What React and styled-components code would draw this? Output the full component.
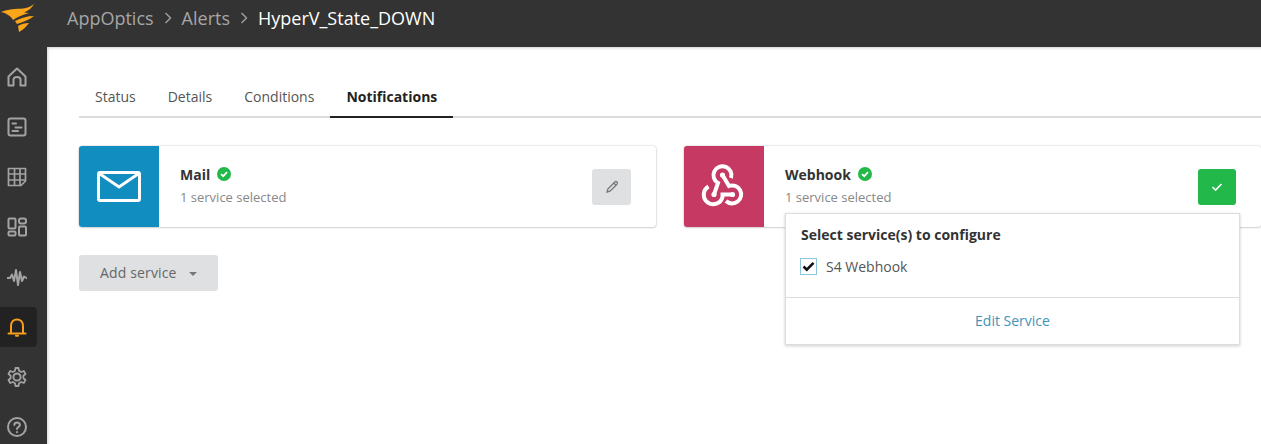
import React from 'react'
import styled, { createGlobalStyle } from 'styled-components'

const GlobalStyle = createGlobalStyle`
  html, body {
    margin: 0;
    padding: 0;
    height: 444px;
    overflow: hidden;
    background: #fff;
    font-family: "Open Sans", "Liberation Sans", sans-serif;
  }
`

const Page = styled.div`
  display: flex;
  flex-direction: column;
  width: 1261px;
  height: 444px;
  overflow: hidden;
`

const Header = styled.header`
  display: flex;
  align-items: flex-start;
  flex: none;
  height: 47px;
  background: #333333;
`

const LogoBox = styled.div`
  width: 67px;
  flex: none;
  height: 34px;
`

const Breadcrumb = styled.nav`
  display: flex;
  align-items: center;
  height: 35px;
  font-size: 18px;
  color: #a6a6a6;
`

const Crumb = styled.span`
  color: ${p => (p.$current ? '#ffffff' : '#a6a6a6')};
`

const CrumbArrow = styled.svg`
  width: 8px;
  height: 12px;
  margin: 0 10px;
  fill: none;
  stroke: #a0a0a0;
  stroke-width: 1.4;
`

const Body = styled.div`
  display: flex;
  flex: 1;
  min-height: 0;
`

const Sidebar = styled.aside`
  display: flex;
  flex-direction: column;
  flex: none;
  width: 47px;
  padding-top: 10px;
  background: #333333;
`

const NavItem = styled.div`
  display: flex;
  flex: none;
  align-items: center;
  justify-content: center;
  width: 37px;
  height: 40px;
  margin-bottom: 10px;
  border-radius: 0 4px 4px 0;
  color: ${p => (p.$active ? '#f99d1c' : '#a3a3a3')};
  background: ${p => (p.$active ? '#222222' : 'transparent')};
`

const NavIcon = styled.svg`
  width: 20px;
  height: 20px;
  margin-left: -3px;
  fill: none;
  stroke: currentColor;
  stroke-width: 2;
  stroke-linecap: round;
  stroke-linejoin: round;
`

const Main = styled.main`
  flex: 1;
  min-width: 0;
  padding: 33px 0 0 32px;
  background: #fff;
  box-shadow: inset 2px 2px 3px -1px rgba(0, 0, 0, 0.18);
`

const Tabs = styled.div`
  display: flex;
  height: 36px;
  border-bottom: 2px solid #dcdcdc;
`

const Tab = styled.div`
  height: 36px;
  padding: 0 16px;
  font-size: 14px;
  line-height: 34px;
  font-weight: ${p => (p.$active ? 700 : 400)};
  color: ${p => (p.$active ? '#222222' : '#555555')};
  border-bottom: 2px solid ${p => (p.$active ? '#222222' : 'transparent')};
`

const Cards = styled.div`
  display: flex;
  gap: 28px;
  margin-top: 28px;
`

const Card = styled.div`
  position: relative;
  display: flex;
  align-items: center;
  flex: none;
  width: 577px;
  height: 81px;
  border-radius: 3px;
  background: #fff;
  box-shadow: 0 0 2px rgba(0, 0, 0, 0.28), 0 1px 2px rgba(0, 0, 0, 0.12);
`

const CardIcon = styled.div`
  display: flex;
  align-items: center;
  justify-content: center;
  flex: none;
  width: 80px;
  height: 81px;
  border-radius: 3px 0 0 3px;
  background: ${p => p.$color};
`

const CardText = styled.div`
  flex: 1;
  padding: 0 0 2px 21px;
`

const CardTitle = styled.div`
  display: flex;
  align-items: center;
  gap: 7px;
  height: 20px;
  font-size: 14px;
  font-weight: 700;
  color: #333333;
`

const CardSub = styled.div`
  margin-top: 3px;
  font-size: 13px;
  line-height: 20px;
  color: #888888;
`

const CardButton = styled.div`
  display: flex;
  align-items: center;
  justify-content: center;
  flex: none;
  width: ${p => p.$width}px;
  height: 36px;
  margin-right: 25px;
  border-radius: 3px;
  background: ${p => p.$color};
`

const AddButton = styled.div`
  display: flex;
  align-items: center;
  gap: 12px;
  width: 139px;
  height: 36px;
  margin-top: 28px;
  padding: 0 0 2px 21px;
  box-sizing: border-box;
  border-radius: 3px;
  font-size: 14px;
  letter-spacing: 0.15px;
  color: #666666;
  background: #dfe0e2;
`

const Caret = styled.span`
  width: 0;
  height: 0;
  margin-top: 4px;
  border-left: 4px solid transparent;
  border-right: 4px solid transparent;
  border-top: 4px solid #777777;
`

const Dropdown = styled.div`
  position: absolute;
  top: 67px;
  left: 101px;
  width: 453px;
  height: 130px;
  border: 1px solid #dddddd;
  background: #fff;
  box-shadow: 0 1px 3px rgba(0, 0, 0, 0.2);
`

const DropdownBody = styled.div`
  box-sizing: border-box;
  height: 84px;
  padding: 11px 15px 0;
  border-bottom: 1px solid #dddddd;
`

const DropdownTitle = styled.div`
  font-size: 14px;
  line-height: 20px;
  font-weight: 700;
  color: #333333;
`

const Option = styled.div`
  display: flex;
  align-items: center;
  gap: 9px;
  margin: 12px 0 0 -1px;
  font-size: 14px;
  color: #555555;
`

const CheckBox = styled.span`
  display: flex;
  align-items: center;
  justify-content: center;
  box-sizing: border-box;
  width: 17px;
  height: 17px;
  border: 1px solid #8cc6dc;
`

const DropdownLink = styled.div`
  font-size: 14px;
  line-height: 46px;
  text-align: center;
  color: #3f93b8;
`

const Logo = () => (
  <svg width="36" height="34" viewBox="0 0 36 34" fill="#fba51a">
    <path d="M34 4 C30 7 27 8 23 8.5 C16 9 8 9 1 12 C6 13 11 16 13 20 C17 17 22 15 29 13 L24 12.5 C28 11 32 8 34 4 Z" />
    <path d="M34 16 C27 16 21 18 15 21 L17 24 C23 22 29 20 34 16 Z" />
    <path d="M29 23 C25 23 21 24 18 26 L19 32 C23 30 26 27 29 23 Z" />
  </svg>
)

const navIcons = [
  <path key="home" d="M1.5 9.5 L10 1.5 L18.5 9.5 V18.5 H13.5 V12.5 C13.5 9 6.5 9 6.5 12.5 V18.5 H1.5 Z" />,
  <g key="list">
    <rect x="1.5" y="1.5" width="17" height="17" rx="2" />
    <path d="M5.5 6.5 H9 M8.5 10.5 H14.5 M5.5 14 H11" />
  </g>,
  <path key="grid" d="M1.5 1.5 H18.5 V14 L14 18.5 H1.5 Z M1.5 7 H18.5 M1.5 13 H18 M7.5 1.5 V18.5 M13 1.5 V18.5" strokeWidth="1.7" />,
  <g key="dash">
    <rect x="1.5" y="1.5" width="7" height="10" rx="1" />
    <rect x="12" y="1.5" width="7" height="5" rx="2" />
    <rect x="1.5" y="14.5" width="7" height="4" rx="1" />
    <rect x="12" y="9.5" width="7" height="9" rx="1" />
  </g>,
  <path key="wave" d="M0.5 11 H3 L5 7.5 L7 14 L9 3 L11 18 L13 5 L15 14 L17 9.5 L19.5 11" strokeWidth="2" />,
  <g key="bell">
    <path d="M4 16 V9 C4 5 6.5 2.5 10 2.5 C13.5 2.5 16 5 16 9 V16" />
    <path d="M1.5 16.5 H18.5" />
    <path d="M9 18.8 H11" />
  </g>,
  <g key="gear">
    <circle cx="10" cy="10" r="3.6" />
    <path d="M8.5 1 H11.5 L12 3.8 L14.2 5 L16.8 4 L18.5 7 L16.4 8.8 V11.2 L18.5 13 L16.8 16 L14.2 15 L12 16.2 L11.5 19 H8.5 L8 16.2 L5.8 15 L3.2 16 L1.5 13 L3.6 11.2 V8.8 L1.5 7 L3.2 4 L5.8 5 L8 3.8 Z" strokeWidth="1.8" />
  </g>,
  <g key="help">
    <circle cx="10" cy="10" r="9" />
    <path d="M7.3 8 C7.3 4.6 12.9 4.6 12.9 8 C12.9 10 10 10 10 12" />
    <path d="M10 15 V15.2" />
  </g>,
]

const StatusCheck = () => (
  <svg width="14" height="14" viewBox="0 0 14 14">
    <circle cx="7" cy="7" r="7" fill="#22b84a" />
    <path d="M4 7.2 L6.2 9.2 L10 5.2" fill="none" stroke="#fff" strokeWidth="1.7" />
  </svg>
)

const MailGlyph = () => (
  <svg width="44" height="32" viewBox="0 0 44 32" fill="none" stroke="#fff" strokeWidth="3">
    <rect x="1.5" y="1.5" width="41" height="28" rx="1.5" />
    <path d="M3 3 L22 16 L41 3" />
  </svg>
)

// three hooks joined into a triangle, like the webhook logo
const WebhookGlyph = () => (
  <svg width="60" height="54" viewBox="0 0 60 54" fill="none" stroke="#fff" strokeWidth="4">
    <path d="M20 34.5 L24 23 A9 9 0 1 1 37 18" />
    <path d="M14.5 26.5 A9.5 9.5 0 1 0 28.5 37 V34.5 H38.5" />
    <path d="M28.5 15 L35 26 A9 9 0 1 1 32 41" />
    <circle cx="28.5" cy="15" r="2.6" fill="#fff" stroke="none" />
    <circle cx="20" cy="34.5" r="2.6" fill="#fff" stroke="none" />
    <circle cx="38.5" cy="34.5" r="2.6" fill="#fff" stroke="none" />
  </svg>
)

export default function App() {
  return (
    <Page>
      <GlobalStyle />
      <Header>
        <LogoBox>
          <Logo />
        </LogoBox>
        <Breadcrumb>
          <Crumb>AppOptics</Crumb>
          <CrumbArrow viewBox="0 0 8 12">
            <path d="M1.5 1 L6.5 6 L1.5 11" />
          </CrumbArrow>
          <Crumb>Alerts</Crumb>
          <CrumbArrow viewBox="0 0 8 12">
            <path d="M1.5 1 L6.5 6 L1.5 11" />
          </CrumbArrow>
          <Crumb $current>HyperV_State_DOWN</Crumb>
        </Breadcrumb>
      </Header>
      <Body>
        <Sidebar>
          {navIcons.map((icon, i) => (
            <NavItem key={i} $active={i === 5}>
              <NavIcon viewBox="0 0 20 20">{icon}</NavIcon>
            </NavItem>
          ))}
        </Sidebar>
        <Main>
          <Tabs>
            <Tab>Status</Tab>
            <Tab>Details</Tab>
            <Tab>Conditions</Tab>
            <Tab $active>Notifications</Tab>
          </Tabs>
          <Cards>
            <Card>
              <CardIcon $color="#118dbf">
                <MailGlyph />
              </CardIcon>
              <CardText>
                <CardTitle>
                  Mail <StatusCheck />
                </CardTitle>
                <CardSub>1 service selected</CardSub>
              </CardText>
              <CardButton $color="#dfe0e2" $width={39}>
                <svg width="14" height="14" viewBox="0 0 14 14" fill="none" stroke="#777" strokeWidth="1.3">
                  <path d="M2 12 L2.8 9 L9.8 2 C10.5 1.4 11.3 1.4 12 2 C12.6 2.7 12.6 3.5 12 4.2 L5 11.2 Z M8.8 3 L11 5.2" />
                </svg>
              </CardButton>
            </Card>
            <Card>
              <CardIcon $color="#c63962">
                <WebhookGlyph />
              </CardIcon>
              <CardText>
                <CardTitle>
                  Webhook <StatusCheck />
                </CardTitle>
                <CardSub>1 service selected</CardSub>
              </CardText>
              <CardButton $color="#22b84a" $width={38}>
                <svg width="12" height="10" viewBox="0 0 12 10" fill="none" stroke="#fff" strokeWidth="1.6">
                  <path d="M1.5 5 L4.6 8 L10.5 2" />
                </svg>
              </CardButton>
              <Dropdown>
                <DropdownBody>
                  <DropdownTitle>Select service(s) to configure</DropdownTitle>
                  <Option>
                    <CheckBox>
                      <svg width="13" height="11" viewBox="0 0 13 11" fill="none" stroke="#111" strokeWidth="2.6">
                        <path d="M1.5 5.5 L4.8 8.6 L11.5 1.8" />
                      </svg>
                    </CheckBox>
                    S4 Webhook
                  </Option>
                </DropdownBody>
                <DropdownLink>Edit Service</DropdownLink>
              </Dropdown>
            </Card>
          </Cards>
          <AddButton>
            Add service <Caret />
          </AddButton>
        </Main>
      </Body>
    </Page>
  )
}
